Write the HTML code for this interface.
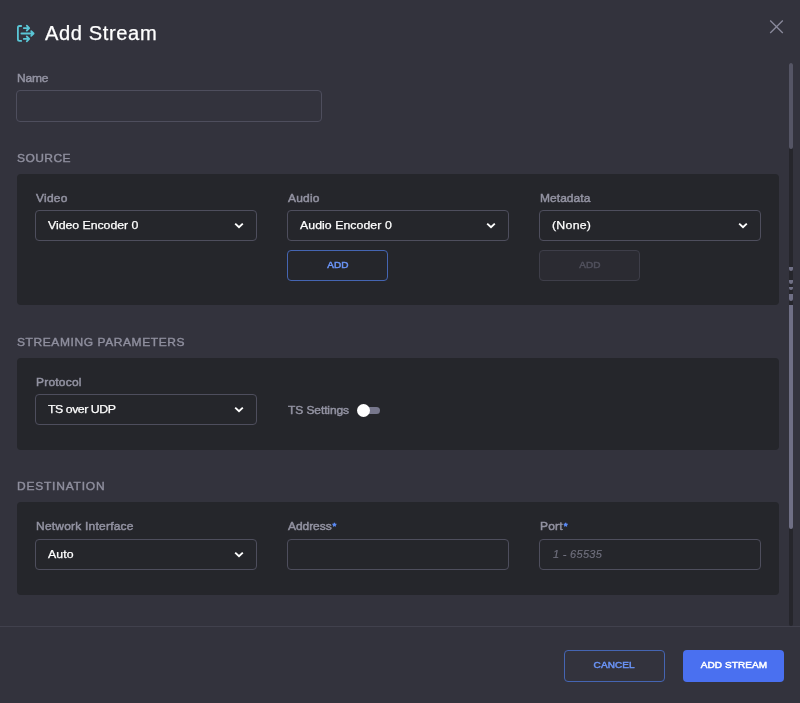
<!DOCTYPE html>
<html lang="en">
<head>
<meta charset="utf-8">
<title>Add Stream</title>
<style>
*{box-sizing:border-box;margin:0;padding:0}
html,body{width:800px;height:703px;overflow:hidden;background:#33333d;font-family:"Liberation Sans",sans-serif;color:#fff}
#wrap{position:absolute;left:0;top:0;width:800px;height:703px;will-change:transform}
.abs{position:absolute}
.title{position:absolute;left:45px;top:21px;font-size:19.5px;line-height:24px;color:#fff;letter-spacing:.6px;transform:scaleX(1.03);transform-origin:0 0;-webkit-text-stroke:.25px #fff}
.lbl{position:absolute;font-size:11px;line-height:14px;transform:scaleX(1.09);transform-origin:0 0;color:#9393a2;white-space:nowrap;letter-spacing:.2px;-webkit-text-stroke:.45px #9393a2}
.sec{position:absolute;left:17px;font-size:11px;line-height:14px;transform:scaleX(1.09);transform-origin:0 0;letter-spacing:.4px;color:#8f8f9e;white-space:nowrap;-webkit-text-stroke:.4px #8f8f9e}
.panel{position:absolute;left:17px;width:762px;background:#25262b;border-radius:4px}
.field{position:absolute;height:31px;border:1px solid #4e4e5d;border-radius:4px;font-size:11.5px;line-height:29px;padding-left:12px;color:#fff;white-space:nowrap;letter-spacing:.05px;-webkit-text-stroke:.25px #fff}
.field .t{display:inline-block;font-size:11.5px;transform:scaleX(1.07);transform-origin:0 50%}
.field svg{position:absolute;right:12px;top:11px}
.btn{position:absolute;height:31px;border-radius:4px;font-size:10px;line-height:29px;text-align:center;letter-spacing:.1px;-webkit-text-stroke:.5px currentColor}
.bt{display:inline-block;font-size:9.3px;transform:scaleX(1.075);position:relative;top:-.8px}
.req{color:#5b8af5;font-size:9px;position:relative;top:-1.5px;margin-left:.8px;-webkit-text-stroke:.6px #5b8af5}
</style>
</head>
<body>
<div id="wrap">
<svg class="abs" style="left:10px;top:18px" width="40" height="30" viewBox="10 18 40 30" fill="none" stroke="#5ac6d6" stroke-width="1.8" stroke-linecap="round" stroke-linejoin="round">
<path d="M21.2 26H19.5Q17.9 26 17.9 27.6V39.3Q17.9 40.9 19.5 40.9H21.2"/>
<path d="M23.8 28.1H28.8M26.8 25.7L29.2 28.1L26.8 30.5"/>
<path d="M21.4 33.5H33.2M31.2 31.1L33.6 33.5L31.2 35.9"/>
<path d="M23.8 38.9H28.8M26.8 36.5L29.2 38.9L26.8 41.3"/>
</svg>
<div class="title">Add Stream</div>
<svg class="abs" style="left:769px;top:19px" width="16" height="16" viewBox="0 0 16 16" stroke="#8a8a9c" stroke-width="1.3" fill="none"><path d="M1.2 1.5L13.8 14M13.8 1.5L1.2 14"/></svg>

<div class="lbl" style="left:17px;top:71px;letter-spacing:-.15px">Name</div>
<div class="field" style="left:16px;top:90px;width:306px;height:32px"></div>

<div class="sec" style="top:151px">SOURCE</div>
<div class="panel" style="top:174px;height:131px"></div>
<div class="lbl" style="left:36px;top:191px">Video</div>
<div class="field" style="left:35px;top:210px;width:222px"><span class="t" style="letter-spacing:-.03px">Video Encoder 0</span><svg width="10" height="8" viewBox="0 0 10 8" fill="none" stroke="#fff" stroke-width="1.9"><path d="M1.2 1.6L5 5.2L8.8 1.6"/></svg></div>
<div class="lbl" style="left:288px;top:191px">Audio</div>
<div class="field" style="left:287px;top:210px;width:222px"><span class="t">Audio Encoder 0</span><svg width="10" height="8" viewBox="0 0 10 8" fill="none" stroke="#fff" stroke-width="1.9"><path d="M1.2 1.6L5 5.2L8.8 1.6"/></svg></div>
<div class="lbl" style="left:540px;top:191px;letter-spacing:.05px">Metadata</div>
<div class="field" style="left:539px;top:210px;width:222px"><span class="t" style="letter-spacing:.25px">(None)</span><svg width="10" height="8" viewBox="0 0 10 8" fill="none" stroke="#fff" stroke-width="1.9"><path d="M1.2 1.6L5 5.2L8.8 1.6"/></svg></div>
<div class="btn" style="left:287px;top:250px;width:101px;border:1px solid #4565b2;color:#6a93f5"><span class="bt">ADD</span></div>
<div class="btn" style="left:539px;top:250px;width:101px;border:1px solid #3e3e49;color:#50505c;background:#2b2b32"><span class="bt">ADD</span></div>

<div class="sec" style="top:335px;letter-spacing:.54px">STREAMING PARAMETERS</div>
<div class="panel" style="top:358px;height:92px"></div>
<div class="lbl" style="left:36px;top:375px">Protocol</div>
<div class="field" style="left:35px;top:394px;width:222px"><span class="t" style="letter-spacing:-.43px">TS over UDP</span><svg width="10" height="8" viewBox="0 0 10 8" fill="none" stroke="#fff" stroke-width="1.9"><path d="M1.2 1.6L5 5.2L8.8 1.6"/></svg></div>
<div class="lbl" style="left:288px;top:403px;letter-spacing:-.08px">TS Settings</div>
<div class="abs" style="left:360px;top:407px;width:20px;height:7px;border-radius:4px;background:#77778c"></div>
<div class="abs" style="left:357px;top:404px;width:13px;height:13px;border-radius:50%;background:#fff"></div>

<div class="sec" style="top:479px;letter-spacing:.72px">DESTINATION</div>
<div class="panel" style="top:502px;height:93px"></div>
<div class="lbl" style="left:36px;top:519px">Network Interface</div>
<div class="field" style="left:35px;top:539px;width:222px"><span class="t">Auto</span><svg width="10" height="8" viewBox="0 0 10 8" fill="none" stroke="#fff" stroke-width="1.9"><path d="M1.2 1.6L5 5.2L8.8 1.6"/></svg></div>
<div class="lbl" style="left:288px;top:519px;letter-spacing:-.05px">Address<span class="req">*</span></div>
<div class="field" style="left:287px;top:539px;width:222px"></div>
<div class="lbl" style="left:540px;top:519px">Port<span class="req">*</span></div>
<div class="field" style="left:539px;top:539px;width:222px;color:#70707e;font-style:italic"><span class="t" style="font-size:11px;letter-spacing:.3px;transform:none;-webkit-text-stroke:.15px #70707e;margin-left:1px">1 - 65535</span></div>

<!-- scrollbar -->
<div class="abs" style="left:788.6px;top:63px;width:4.9px;height:563px;background:#26262c;border-radius:3px"></div>
<div class="abs" style="left:788.6px;top:63px;width:4.9px;height:86px;background:#555565;border-radius:3px"></div>
<div class="abs" style="left:788.6px;top:305px;width:4.9px;height:224px;background:#6f6f85;border-radius:0 0 3px 3px"></div>
<div class="abs" style="left:788.6px;top:267px;width:4.9px;height:4px;background:#6f6f85;border-radius:0 0 3px 3px"></div>
<div class="abs" style="left:788.6px;top:280px;width:4.9px;height:4px;background:#6f6f85;border-radius:0 0 3px 3px"></div>
<div class="abs" style="left:788.6px;top:287px;width:4.9px;height:3px;background:#6f6f85;border-radius:0 0 3px 3px"></div>
<div class="abs" style="left:788.6px;top:294px;width:4.9px;height:7px;background:#6f6f85;border-radius:0 0 3px 3px"></div>

<!-- footer -->
<div class="abs" style="left:0;top:626px;width:800px;height:1px;background:#41414d"></div>
<div class="btn" style="left:564px;top:650px;width:101px;height:32px;line-height:30px;border:1px solid #4565b2;color:#6a93f5"><span class="bt">CANCEL</span></div>
<div class="btn" style="left:683px;top:650px;width:101px;height:32px;background:#4a70f0;color:#fff;line-height:32px"><span class="bt">ADD STREAM</span></div>
</div>
</body>
</html>
